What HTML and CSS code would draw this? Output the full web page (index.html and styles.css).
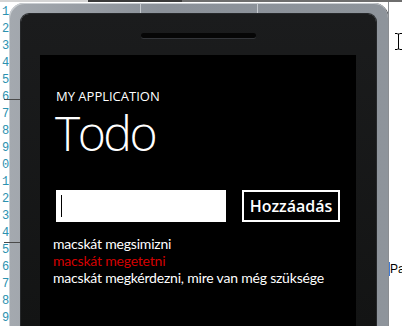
FILE: index.html
```html
<!DOCTYPE html>
<html lang="hu">
<head>
    <meta charset="UTF-8">
    <meta name="viewport" content="width=device-width, initial-scale=1.0">
    <title>Todo</title>
    <link rel="stylesheet" href="styles.css">
</head>
<body>
    <!-- Editor strip along the top -->
    <div class="topbar">
        <span class="tb-light"></span>
        <span class="tb-dark"></span>
        <span class="tb-mid"></span>
    </div>

    <div class="workspace">
        <!-- Line numbers of the code view -->
        <div class="gutter">
            <span>1</span><span>2</span><span>3</span><span>4</span><span>5</span>
            <span>6</span><span>7</span><span>8</span><span>9</span><span>0</span>
            <span>1</span><span>2</span><span>3</span><span>4</span><span>5</span>
            <span>6</span><span>7</span><span>8</span><span>9</span>
        </div>
        <i class="fold fold-a"></i>
        <i class="fold fold-b"></i>

        <!-- Phone emulator -->
        <div class="phone">
            <div class="bezel-top">
                <i class="seam seam-a"></i>
                <i class="seam seam-b"></i>
            </div>
            <div class="face">
                <div class="speaker"></div>
                <div class="screen">
                    <p class="app-name">MY APPLICATION</p>
                    <h1 class="page-title">Todo</h1>

                    <div class="add-row">
                        <div class="field"><span class="caret"></span></div>
                        <button class="add-btn">Hozzáadás</button>
                    </div>

                    <ul class="todos">
                        <li>macskát megsimizni</li>
                        <li class="done">macskát megetetni</li>
                        <li>macskát megkérdezni, mire van még szüksége</li>
                    </ul>
                </div>
            </div>
        </div>

        <!-- Designer surface to the right -->
        <div class="side">
            <svg class="ibeam" width="7" height="17" viewBox="0 0 7 17">
                <path d="M0 0.5h2.5M4.5 0.5h2.5M3.5 1v15M0 16.5h2.5M4.5 16.5h2.5M2.5 1h2M2.5 16h2" stroke="#000" stroke-width="1" fill="none"/>
            </svg>
            <span class="side-text">Pa</span>
        </div>
    </div>
</body>
</html>
```

FILE: styles.css
```css
body {
    margin: 0;
    width: 402px;
    height: 326px;
    overflow: hidden;
    background: #fff;
    font-family: "Open Sans", sans-serif;
    display: flex;
    flex-direction: column;
}
.topbar {
    height: 2px;
    flex: none;
    display: flex;
}
.tb-light {
    width: 88px;
    background: #d4d4d4;
}
.tb-dark {
    width: 94px;
    background: #3a3a3a;
}
.tb-mid {
    flex: 1;
    background: #6e6e6e;
}
.workspace {
    flex: 1;
    min-height: 0;
    display: flex;
    position: relative;
}
.gutter {
    width: 9px;
    flex: none;
    padding-top: 2px;
    font: 12px/17px "Liberation Mono", monospace;
    color: #2b91af;
}
.gutter span {
    display: block;
    padding-left: 2px;
}
.fold {
    position: absolute;
    left: 4px;
    width: 16px;
    height: 1px;
    background: #4a4a4a;
    z-index: 1;
}
.fold-a {
    top: 97px;
}
.fold-b {
    top: 240px;
}
.phone {
    width: 379px;
    flex: none;
    margin-top: 1px;
    padding: 0 12px;
    box-sizing: border-box;
    border-radius: 15px 15px 0 0;
    background: linear-gradient(to right, #a4a9af, #8b9199 40%, #8e949b);
    box-shadow: inset 1px 1px 0 #c9cdd1, 1px 0 0 #55585c;
    display: flex;
    flex-direction: column;
}
.bezel-top {
    height: 11px;
    flex: none;
    display: flex;
}
.seam {
    width: 1px;
    height: 10px;
    background: #c6cacf;
}
.seam-a {
    margin-left: 119px;
}
.seam-b {
    margin-left: 116px;
}
.face {
    flex: 1;
    background: linear-gradient(to bottom, #1b1c1d, #131414);
    border-radius: 8px 8px 0 0;
    box-shadow: 0 0 0 1px #26282a;
    display: flex;
    flex-direction: column;
}
.speaker {
    width: 115px;
    height: 5px;
    margin: 19px auto 0;
    border-radius: 3px;
    background: #060606;
    box-shadow: 0 1px 0 #34363a;
}
.screen {
    flex: 1;
    margin: 17px 20px 0 19px;
    background: #000;
    color: #fff;
}
.app-name {
    margin: 33px 0 0 16px;
    font-size: 13px;
    line-height: 16px;
}
.page-title {
    margin: 5px 0 0 15px;
    font-size: 48px;
    font-weight: 300;
    line-height: 48px;
    letter-spacing: -2.5px;
}
.add-row {
    display: flex;
    gap: 16px;
    margin: 33px 0 0 16px;
}
.field {
    width: 170px;
    height: 32px;
    box-sizing: border-box;
    padding: 5px 0 0 5px;
    background: #fff;
}
.caret {
    display: block;
    width: 1px;
    height: 22px;
    background: #000;
}
.add-btn {
    width: 98px;
    height: 32px;
    box-sizing: border-box;
    padding: 0;
    border: 2px solid #fff;
    background: transparent;
    color: #fff;
    font: 600 16px "Open Sans", sans-serif;
    display: flex;
    align-items: center;
    justify-content: center;
}
.todos {
    list-style: none;
    margin: 13px 0 0 13px;
    padding: 0;
    font: 14px/17px Lato, sans-serif;
    letter-spacing: -0.2px;
}
.todos .done {
    color: #d40000;
}
.side {
    width: 14px;
    flex: none;
    box-sizing: border-box;
    border-left: 1px solid #8a8d91;
    display: flex;
    flex-direction: column;
    overflow: hidden;
}
.ibeam {
    flex: none;
    margin: 31px 0 0 6px;
}
.side-text {
    margin-top: 212px;
    font: 12px/14px "Liberation Sans", sans-serif;
    color: #000;
    white-space: nowrap;
    border-left: 1px solid #3d7bd9;
}
```
